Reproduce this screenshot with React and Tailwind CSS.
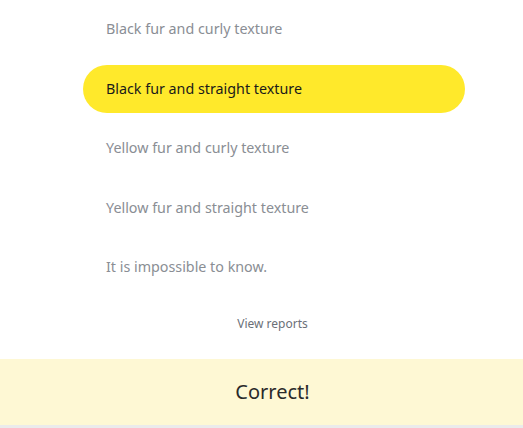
export default function App() {
  const options = [
    { label: "Black fur and curly texture", selected: false },
    { label: "Black fur and straight texture", selected: true },
    { label: "Yellow fur and curly texture", selected: false },
    { label: "Yellow fur and straight texture", selected: false },
    { label: "It is impossible to know.", selected: false },
  ];
  return (
    <div className="w-[523px] h-[428px] overflow-hidden bg-white flex flex-col" style={{ fontFamily: '"Noto Sans", sans-serif' }}>
      <div className="flex flex-col gap-[11.5px] pt-[5px] pl-[83px] pr-[58px]">
        {options.map((o) => (
          <div
            key={o.label}
            className={
              "h-[48px] rounded-full flex items-center pl-[23px] text-[14.3px] " +
              (o.selected ? "bg-[#ffe92b] text-[#1a1a1a]" : "text-[#8a8e94]")
            }
          >
            {o.label}
          </div>
        ))}
      </div>
      <div className="h-[68px] flex items-center justify-center text-[12px] text-[#6b7078] pl-[22px] pb-[2px]">
        View reports
      </div>
      <div className="h-[66px] bg-[#fef8d4] flex items-center justify-center text-[20px] text-[#2a2a2a] pl-[22px]">
        Correct!
      </div>
      <div className="flex-1 bg-[#ebebeb]" />
    </div>
  );
}
